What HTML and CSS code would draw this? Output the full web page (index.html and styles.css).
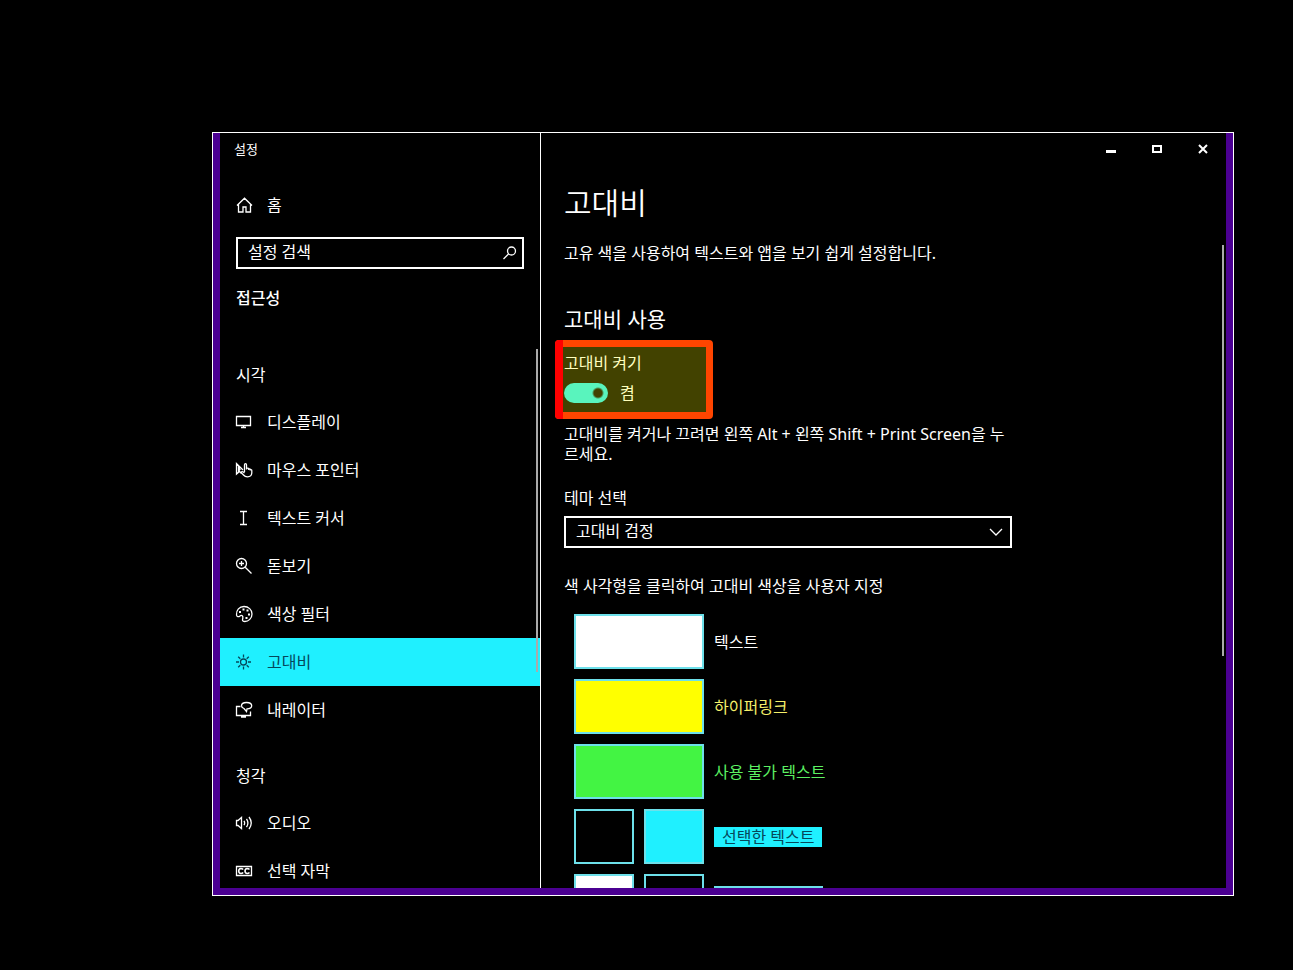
FILE: index.html
```html
<!DOCTYPE html>
<html lang="ko">
<head>
  <meta charset="UTF-8" />
  <meta name="viewport" content="width=device-width, initial-scale=1" />
  <title>설정</title>
  <link rel="stylesheet" href="styles.css">
</head>
<body>
  <div class="window">
    <aside class="sidebar">
      <div class="app-title">설정</div>

      <a class="nav-item home" href="#home">
        <svg class="icon" viewBox="0 0 18 18"><path d="M2 9.5 9.500 2.200l7.500 7.300M3.500 8.500v7.500h4.500v-5h3v5h4.500V8.500"/></svg>
        <span>홈</span>
      </a>

      <div class="search">
        <input type="text" placeholder="설정 검색" aria-label="설정 검색" />
        <svg class="icon search-icon" viewBox="0 0 18 18"><circle cx="10.500" cy="7" r="4"/><path d="M7.500 10 2.500 15"/></svg>
      </div>

      <h2 class="category">접근성</h2>

      <nav class="nav">
        <h3>시각</h3>
        <a class="nav-item" href="#display">
          <svg class="icon" viewBox="0 0 18 18"><path d="M1.500 3.500h14v9h-14zM8.500 12.500v2M6 14.500h5"/></svg>
          <span>디스플레이</span>
        </a>
        <a class="nav-item" href="#pointer">
          <svg class="icon" viewBox="0 0 18 18"><path d="M8 9 1.500 2.500v10.500l3-2.500 2 2M3.500 6v4l1.500-1.500z"/><path d="M9.500 11V4q0-1.300 1-1.300t1 1.300v4.500M11.500 7.500q2-1 2.200.5V9M13.700 8q1.500-.5 1.500.7V9.500M15.200 8.700q1.600-.5 1.600 1V12q-.3 3.800-4.300 3.800-2.500 0-4-1.800L6 11.500q.8-1.500 2.300-.5L9.500 12"/></svg>
          <span>마우스 포인터</span>
        </a>
        <a class="nav-item" href="#cursor">
          <svg class="icon" viewBox="0 0 18 18"><path d="M5 2.500h7M5 15.500h7M8.500 2.500v13"/></svg>
          <span>텍스트 커서</span>
        </a>
        <a class="nav-item" href="#magnifier">
          <svg class="icon" viewBox="0 0 18 18"><circle cx="6.500" cy="6.500" r="5"/><path d="M10.200 10.200l6.300 6.300M6.500 4v5M4 6.500h5"/></svg>
          <span>돋보기</span>
        </a>
        <a class="nav-item" href="#filter">
          <svg class="icon" viewBox="0 0 18 18"><path d="M1.500 10C1 5 4.500 1.500 9 1.500s8 3.200 8 7.500-3.500 7.500-7.200 7.500c-3 0-2.300-2-2-3.200.5-2.300-1-3.600-2.800-2.300-1.500 1.200-3.200.8-3.500-1z"/><path class="dots" d="M4 6h2v2H4zM7.500 3.500h2v2h-2zM11.500 4.500h2v2h-2zM13 8.500h2v2h-2zM10.500 12h2v2h-2z"/></svg>
          <span>색상 필터</span>
        </a>
        <a class="nav-item active" href="#high-contrast">
          <svg class="icon" viewBox="0 0 18 18"><circle cx="8.500" cy="9" r="3"/><path d="M8.500 1.500v3M8.500 13.500v3M1 9h3M13 9h3M3.200 3.700l2.100 2.100M11.700 12.200l2.100 2.100M3.200 14.300l2.100-2.100M11.700 5.800l2.100-2.100"/></svg>
          <span>고대비</span>
        </a>
        <a class="nav-item" href="#narrator">
          <svg class="icon" viewBox="0 0 18 18"><path d="M5.500 5.500h-4v9h14v-4M8.500 14.500v2M6 16h5"/><path d="M11.500 1.500c-3 0-5 1.300-5 3.300 0 1.500 1.200 2.200 2.500 2.700l2.500 3 .5-2.700c3 0 4.700-1 4.700-3s-2.200-3.300-5.200-3.300z"/></svg>
          <span>내레이터</span>
        </a>
        <h3>청각</h3>
        <a class="nav-item" href="#audio">
          <svg class="icon" viewBox="0 0 18 18"><path d="M1.500 6.500H3l3.500-3v11l-3.500-3H1.500zM9 6.800q1.300 2.200 0 4.400M11.500 4.800q2.800 4.200 0 8.400M14 3q4.500 6 0 12"/></svg>
          <span>오디오</span>
        </a>
        <a class="nav-item" href="#captions">
          <svg class="icon" viewBox="0 0 18 18"><path d="M1.500 4.500h15v9h-15z"/><path class="cc" d="M8.200 7.500q-1-1-2.300-1-2.200.3-2.200 2.500t2.200 2.500q1.300 0 2.300-1M14.500 7.500q-1-1-2.300-1-2.200.3-2.200 2.500t2.200 2.500q1.300 0 2.300-1"/></svg>
          <span>선택 자막</span>
        </a>
        <div class="scrollbar"></div>
      </nav>
    </aside>

    <main class="content">
      <div class="controls">
        <button type="button" aria-label="최소화"><svg viewBox="0 0 10 10"><path d="M0 7.500h10" stroke-width="3"/></svg></button>
        <button type="button" aria-label="최대화"><svg viewBox="0 0 10 10"><path d="M1 2h8v6H1z" stroke-width="2"/></svg></button>
        <button type="button" aria-label="닫기"><svg viewBox="0 0 10 10"><path d="M1 1l8 8M9 1L1 9" stroke-width="2"/></svg></button>
      </div>

      <div class="page">
        <h1>고대비</h1>
        <p class="intro">고유 색을 사용하여 텍스트와 앱을 보기 쉽게 설정합니다.</p>

        <h2>고대비 사용</h2>
        <div class="toggle-group">
          <label for="contrast">고대비 켜기</label>
          <div class="toggle-row">
            <input type="checkbox" id="contrast" class="toggle" checked />
            <span>켬</span>
          </div>
          <div class="highlight"></div>
        </div>
        <p class="hint">고대비를 켜거나 끄려면 왼쪽 Alt + 왼쪽 Shift + Print Screen을 누르세요.</p>

        <label for="theme">테마 선택</label>
        <div class="dropdown">
          <select id="theme">
            <option>고대비 검정</option>
          </select>
          <svg class="chevron" viewBox="0 0 14 8"><path d="M1 1l6 6 6-6"/></svg>
        </div>

        <p class="colors-title">색 사각형을 클릭하여 고대비 색상을 사용자 지정</p>
        <div class="colors">
          <div class="color-row">
            <button type="button" class="swatch white" aria-label="텍스트"></button>
            <span>텍스트</span>
          </div>
          <div class="color-row">
            <button type="button" class="swatch yellow" aria-label="하이퍼링크"></button>
            <span class="link-text">하이퍼링크</span>
          </div>
          <div class="color-row">
            <button type="button" class="swatch green" aria-label="사용 불가 텍스트"></button>
            <span class="disabled-text">사용 불가 텍스트</span>
          </div>
          <div class="color-row">
            <button type="button" class="swatch half" aria-label="선택한 텍스트 전경"></button>
            <button type="button" class="swatch half cyan" aria-label="선택한 텍스트 배경"></button>
            <span class="selected-text">선택한 텍스트</span>
          </div>
          <div class="color-row">
            <button type="button" class="swatch half white" aria-label="단추 텍스트 전경"></button>
            <button type="button" class="swatch half" aria-label="단추 텍스트 배경"></button>
            <span class="button-text"></span>
          </div>
        </div>
      </div>
      <div class="scrollbar"></div>
    </main>
  </div>
</body>
</html>
```

FILE: styles.css
```css
* {
  box-sizing: border-box;
}

body {
  margin: 0;
  height: 100vh;
  padding: 132px 59px 74px 212px;
  background: #000;
  color: #fff;
  font-family: "Noto Sans", "Noto Sans CJK KR", sans-serif;
  font-size: 16px;
  line-height: 20px;
  overflow: hidden;
}

h1, h2, h3, p {
  margin: 0;
  font-weight: 400;
}

button, input, select {
  margin: 0;
  font: inherit;
  color: inherit;
}

/* Window frame */
.window {
  display: flex;
  height: 100%;
  border: 1px solid #fff;
  background: #000;
  box-shadow: inset 7px 0 #4b0092, inset -7px 0 #4b0092, inset 0 -7px #4b0092;
  padding: 0 7px 7px;
}

/* Sidebar */
.sidebar {
  display: flex;
  flex-direction: column;
  width: 321px;
  flex-shrink: 0;
  border-right: 1px solid #fff;
}

.app-title {
  padding: 6px 14px;
  font-size: 13px;
}

.nav-item {
  display: flex;
  align-items: center;
  gap: 14px;
  height: 48px;
  padding: 0 15px;
  color: #fff;
  text-decoration: none;
}

.home {
  margin-top: 16px;
}

.icon {
  width: 18px;
  height: 18px;
  flex-shrink: 0;
  fill: none;
  stroke: currentColor;
  stroke-width: 1.3;
}

.icon .dots {
  fill: currentColor;
  stroke: none;
}

.icon .cc {
  stroke-width: 1.6;
}

.search {
  position: relative;
  margin: 8px 16px 0;
}

.search input {
  display: block;
  width: 100%;
  height: 32px;
  padding: 0 36px 2px 10px;
  border: 2px solid #fff;
  border-radius: 0;
  background: #000;
  outline: none;
}

.search input::placeholder {
  color: #fff;
  opacity: 1;
}

.search-icon {
  position: absolute;
  top: 7px;
  right: 5px;
}

.category {
  margin: 19px 16px 0;
  font-size: 16px;
  font-weight: 500;
}

.nav {
  position: relative;
  flex: 1;
  min-height: 0;
  margin-top: 41px;
  overflow: hidden;
}

.nav h3 {
  padding: 16px 16px 13px;
  font-size: 16px;
}

.nav .nav-item + h3 {
  padding-top: 32px;
}

.nav-item.active {
  background: #1ff0ff;
  color: #05475a;
}

.scrollbar {
  position: absolute;
  width: 2px;
  background: #aaa;
}

.nav .scrollbar {
  top: 0;
  right: 2px;
  height: 60%;
}

/* Content */
.content {
  position: relative;
  flex: 1;
  min-width: 0;
  overflow: hidden;
}

.content > .scrollbar {
  top: 112px;
  right: 2px;
  height: 411px;
}

.controls {
  display: flex;
  justify-content: flex-end;
}

.controls button {
  display: flex;
  align-items: center;
  justify-content: center;
  width: 46px;
  height: 32px;
  padding: 0;
  border: 0;
  background: none;
}

.controls svg {
  width: 10px;
  height: 10px;
  fill: none;
  stroke: #fff;
}

.page {
  max-width: 495px;
  padding: 18px 24px 0 23px;
}

.page h1 {
  font-size: 30px;
  line-height: 40px;
  font-weight: 350;
}

.intro {
  margin-top: 20px;
}

.page h2 {
  margin-top: 42px;
  font-size: 21px;
  line-height: 28px;
}

.page label {
  display: block;
}

.toggle-group {
  position: relative;
  margin-top: 20px;
}

.toggle-row {
  display: flex;
  align-items: center;
  gap: 12px;
  margin-top: 10px;
}

.toggle {
  appearance: none;
  width: 44px;
  height: 20px;
  border-radius: 10px;
  background: radial-gradient(circle at 34px 10px, #000 4px, #1ff0ff 6px);
}

.highlight {
  position: absolute;
  top: -13px;
  left: -9px;
  width: 158px;
  height: 79px;
  border: 7px solid #ff4500;
  border-radius: 4px;
  background: rgba(255, 255, 0, 0.26);
  background-clip: padding-box;
  pointer-events: none;
}

.highlight::before {
  content: "";
  position: absolute;
  top: -7px;
  bottom: -7px;
  left: -7px;
  width: 8px;
  border-radius: 4px 0 0 4px;
  background: #f00;
}

.hint {
  margin: 21px 0 24px;
}

.dropdown {
  position: relative;
  margin-top: 8px;
}

.dropdown select {
  display: block;
  appearance: none;
  width: 100%;
  height: 32px;
  padding: 0 36px 2px 10px;
  border: 2px solid #fff;
  border-radius: 0;
  background: #000;
}

.chevron {
  position: absolute;
  top: 12px;
  right: 9px;
  width: 14px;
  height: 8px;
  fill: none;
  stroke: #fff;
  stroke-width: 1.3;
  pointer-events: none;
}

.colors-title {
  margin-top: 28px;
}

/* Color swatches */
.colors {
  display: flex;
  flex-direction: column;
  gap: 10px;
  margin: 18px 0 0 10px;
}

.color-row {
  display: flex;
  align-items: center;
  gap: 10px;
}

.swatch {
  width: 130px;
  height: 55px;
  padding: 0;
  border: 2px solid #6de0ea;
  background: #000;
}

.swatch.half {
  width: 60px;
}

.swatch.white {
  background: #fff;
}

.swatch.yellow {
  background: #ff0;
}

.swatch.green {
  background: #43f443;
}

.swatch.cyan {
  background: #1ff0ff;
}

.link-text {
  color: #f5f06a;
}

.disabled-text {
  color: #5cf062;
}

.selected-text {
  padding: 0 8px;
  background: #1ff0ff;
  color: #05475a;
}

.button-text {
  width: 109px;
  height: 32px;
  border: 2px solid #6de0ea;
}
```
